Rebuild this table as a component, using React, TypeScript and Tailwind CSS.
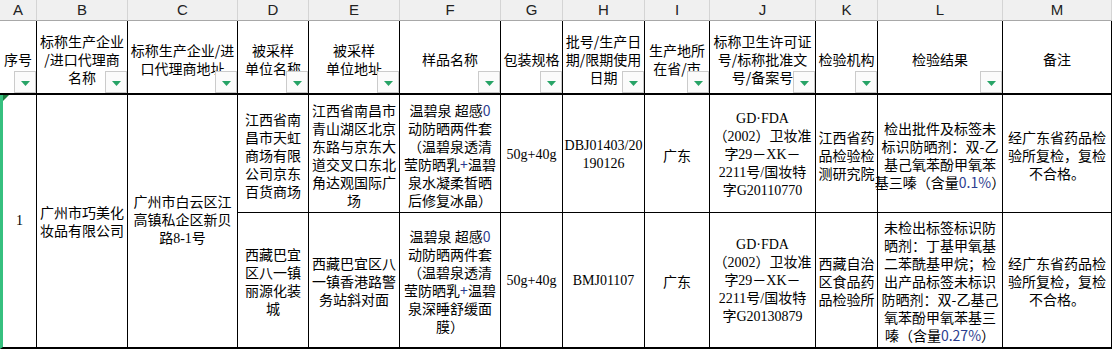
import type { ReactNode } from "react";

const letters = ["A", "B", "C", "D", "E", "F", "G", "H", "I", "J", "K", "L", "M"];

const cjk = "font-['Noto_Sans_CJK_SC',sans-serif]";
const serif = "font-['Liberation_Serif','Noto_Sans_CJK_SC',serif]";

// latin glyphs inside CJK cells show up blue-ish in the sheet
const Num = ({ children }: { children: ReactNode }) => <span className="text-[#2c3d8f]">{children}</span>;

const headers: { lines: string[]; filter: boolean }[] = [
    { lines: ["序号"], filter: true },
    { lines: ["标称生产企业", "/进口代理商", "名称"], filter: true },
    { lines: ["标称生产企业/进", "口代理商地址"], filter: true },
    { lines: ["被采样", "单位名称"], filter: true },
    { lines: ["被采样", "单位地址"], filter: true },
    { lines: ["样品名称"], filter: true },
    { lines: ["包装规格"], filter: true },
    { lines: ["批号/生产日", "期/限期使用", "日期"], filter: true },
    { lines: ["生产地所", "在省/市"], filter: true },
    { lines: ["标称卫生许可证", "号/标称批准文", "号/备案号"], filter: true },
    { lines: ["检验机构"], filter: true },
    { lines: ["检验结果"], filter: true },
    { lines: ["备注"], filter: false },
];

type Cell = { lines: ReactNode[]; font?: string };

const rowOne: Cell[] = [
    { lines: ["江西省南", "昌市天虹", "商场有限", "公司京东", "百货商场"] },
    { lines: ["江西省南昌市", "青山湖区北京", "东路与京东大", "道交叉口东北", "角达观国际广", "场"] },
    {
        lines: [
            <>温碧泉 超感<Num>0</Num></>,
            "动防晒两件套",
            "（温碧泉透清",
            <>莹防晒乳<Num>+</Num>温碧</>,
            "泉水凝柔皙晒",
            "后修复冰晶）",
        ],
    },
    { lines: ["50g+40g"], font: serif },
    { lines: ["DBJ01403/20", "190126"], font: serif },
    { lines: ["广东"] },
    { lines: ["GD·FDA", "（2002）卫妆准", "字29－XK－", "2211号/国妆特", "字G20110770"], font: serif },
    { lines: ["江西省药", "品检验检", "测研究院"] },
    {
        lines: [
            "检出批件及标签未",
            "标识防晒剂：双-乙",
            "基己氧苯酚甲氧苯",
            <>基三嗪（含量<Num>0.1%</Num>）</>,
        ],
    },
    { lines: ["经广东省药品检", "验所复检，复检", "不合格。"] },
];

const rowTwo: Cell[] = [
    { lines: ["西藏巴宜", "区八一镇", "丽源化装", "城"] },
    { lines: ["西藏巴宜区八", "一镇香港路警", "务站斜对面"] },
    {
        lines: [
            <>温碧泉 超感<Num>0</Num></>,
            "动防晒两件套",
            "（温碧泉透清",
            <>莹防晒乳<Num>+</Num>温碧</>,
            "泉深睡舒缓面",
            "膜）",
        ],
    },
    { lines: ["50g+40g"], font: serif },
    { lines: ["BMJ01107"], font: serif },
    { lines: ["广东"] },
    { lines: ["GD·FDA", "（2002）卫妆准", "字29－XK－", "2211号/国妆特", "字G20130879"], font: serif },
    { lines: ["西藏自治", "区食品药", "品检验所"] },
    {
        lines: [
            "未检出标签标识防",
            "晒剂：丁基甲氧基",
            "二苯酰基甲烷；检",
            "出产品标签未标识",
            "防晒剂：双-乙基己",
            "氧苯酚甲氧苯基三",
            <>嗪（含量<Num>0.27%</Num>）</>,
        ],
    },
    { lines: ["经广东省药品检", "验所复检，复检", "不合格。"] },
];

function Lines({ lines }: { lines: ReactNode[] }) {
    return (
        <div>
            {lines.map((line, i) => (
                <div key={i} className="whitespace-nowrap">{line}</div>
            ))}
        </div>
    );
}

function Filter() {
    return (
        <div className="absolute right-0 bottom-0 flex h-[22px] w-[22px] items-center justify-center border border-[#cbcbcb] bg-[#fbfbfb]">
            <svg width="9" height="5" viewBox="0 0 9 5" className="mt-[2px]">
                <path d="M0 0h9L4.5 5z" fill="#27a366" />
            </svg>
        </div>
    );
}

const bodyCell = "flex items-center justify-center border-r border-b border-black text-center text-[14px] leading-[18px] text-black";

export default function App() {
    return (
        <div className="h-[350px] w-[1114px] overflow-hidden bg-white">
            <div className="grid w-[1112px] grid-cols-[37px_91px_110px_71px_91px_101px_62px_82px_65px_106px_62px_125px_109px] grid-rows-[21px_74px_118px_136px]">

                {/* column letters */}
                {letters.map((l) => (
                    <div
                        key={l}
                        className="flex items-center justify-center border-r border-b border-r-[#d4d4d4] border-b-[#a8a8a8] bg-[#f0f0f0] font-['Liberation_Sans',sans-serif] text-[15px] text-[#222]"
                    >
                        {l}
                    </div>
                ))}

                {/* header row */}
                {headers.map((h, i) => (
                    <div
                        key={i}
                        className={`relative flex items-center justify-center border-r border-b-2 border-black pt-[4px] text-center text-[14px] leading-[18px] text-black ${cjk}`}
                    >
                        <Lines lines={h.lines} />
                        {h.filter && <Filter />}
                    </div>
                ))}

                {/* merged cells */}
                <div className={`relative row-span-2 border-l-[3px] border-l-[#36c07f] ${bodyCell} border-b-2 ${serif}`}>
                    <svg width="6" height="6" viewBox="0 0 6 6" className="absolute top-0 left-0">
                        <path d="M0 0h6L0 6z" fill="#1d7a3e" />
                    </svg>
                    1
                </div>
                <div className={`row-span-2 ${bodyCell} border-b-2 ${cjk}`}>
                    <Lines lines={["广州市巧美化", "妆品有限公司"]} />
                </div>
                <div className={`row-span-2 ${bodyCell} border-b-2 ${serif}`}>
                    <Lines lines={["广州市白云区江", "高镇私企区新贝", "路8-1号"]} />
                </div>

                {rowOne.map((c, i) => (
                    <div key={`a${i}`} className={`${bodyCell} pt-[2px] ${c.font ?? cjk}`}>
                        <Lines lines={c.lines} />
                    </div>
                ))}
                {rowTwo.map((c, i) => (
                    <div key={`b${i}`} className={`${bodyCell} border-b-2 pt-[2px] ${c.font ?? cjk}`}>
                        <Lines lines={c.lines} />
                    </div>
                ))}
            </div>
        </div>
    );
}
